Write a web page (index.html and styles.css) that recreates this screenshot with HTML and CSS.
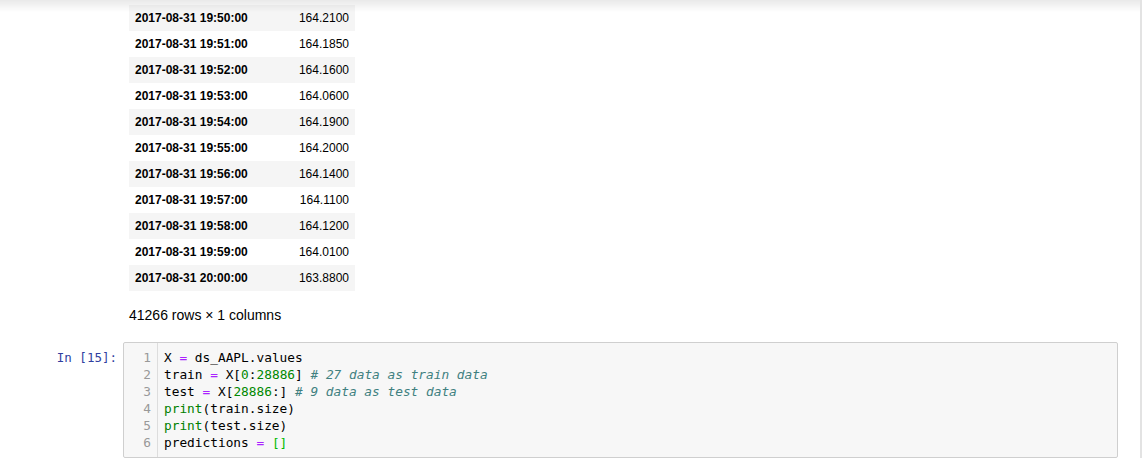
FILE: index.html
```html
<!DOCTYPE html>
<html>
<head>
<meta charset="utf-8">
<link rel="stylesheet" href="styles.css">
</head>
<body>
<div class="header-shadow"></div>
<div class="notebook">
  <div class="output">
    <table class="df">
      <tbody>
        <tr><th>2017-08-31 19:50:00</th><td>164.2100</td></tr>
        <tr><th>2017-08-31 19:51:00</th><td>164.1850</td></tr>
        <tr><th>2017-08-31 19:52:00</th><td>164.1600</td></tr>
        <tr><th>2017-08-31 19:53:00</th><td>164.0600</td></tr>
        <tr><th>2017-08-31 19:54:00</th><td>164.1900</td></tr>
        <tr><th>2017-08-31 19:55:00</th><td>164.2000</td></tr>
        <tr><th>2017-08-31 19:56:00</th><td>164.1400</td></tr>
        <tr><th>2017-08-31 19:57:00</th><td>164.1100</td></tr>
        <tr><th>2017-08-31 19:58:00</th><td>164.1200</td></tr>
        <tr><th>2017-08-31 19:59:00</th><td>164.0100</td></tr>
        <tr><th>2017-08-31 20:00:00</th><td>163.8800</td></tr>
      </tbody>
    </table>
    <p class="shape">41266 rows × 1 columns</p>
  </div>
  <div class="cell">
    <div class="prompt">In&nbsp;[15]:</div>
    <div class="input">
      <div class="gutter">
        <div>1</div><div>2</div><div>3</div><div>4</div><div>5</div><div>6</div>
      </div>
      <div class="code">
        <div class="line">X <span class="op">=</span> ds_AAPL.values</div>
        <div class="line">train <span class="op">=</span> X[<span class="num">0</span>:<span class="num">28886</span>] <span class="cm"># 27 data as train data</span></div>
        <div class="line">test <span class="op">=</span> X[<span class="num">28886</span>:] <span class="cm"># 9 data as test data</span></div>
        <div class="line"><span class="bi">print</span>(train.size)</div>
        <div class="line"><span class="bi">print</span>(test.size)</div>
        <div class="line">predictions <span class="op">=</span> <span class="br">[]</span></div>
      </div>
    </div>
  </div>
</div>
</body>
</html>
```
FILE: styles.css
```css
html, body {
  margin: 0;
  padding: 0;
  background: #fff;
}
body {
  font-family: "Liberation Sans", Arial, sans-serif;
  color: #000;
  overflow: hidden;
}
.header-shadow {
  position: fixed;
  top: 0;
  left: 0;
  width: 1140px;
  height: 12px;
  background: linear-gradient(to bottom, rgba(0,0,0,0.085), rgba(0,0,0,0));
  pointer-events: none;
}
.notebook {
  width: 1140px;
  min-height: 458px;
  border-right: 2px solid #e3e3e3;
}
.output {
  padding: 5px 0 0 129px;
}
.df {
  border-collapse: collapse;
  border-spacing: 0;
  font-size: 12px;
  width: 226px;
}
.df tr {
  height: 26px;
}
.df tr:nth-child(odd) {
  background: #f5f5f5;
}
.df th {
  font-weight: bold;
  text-align: left;
  padding: 0 0 0 6px;
  white-space: nowrap;
}
.df td {
  text-align: right;
  padding: 0 6px 0 0;
}
.shape {
  margin: 14px 0 0 0;
  font-size: 14px;
  line-height: 20px;
}
.cell {
  display: flex;
  margin-top: 17px;
}
.prompt {
  width: 117px;
  padding-right: 6px;
  text-align: right;
  font-family: "DejaVu Sans Mono", monospace;
  font-size: 12.5px;
  color: #303F9F;
  padding-top: 7px;
  line-height: 17px;
}
.input {
  width: 993px;
  display: flex;
  background: #f7f7f7;
  border: 1px solid #cfcfcf;
  border-radius: 2px;
  font-family: "DejaVu Sans Mono", monospace;
  font-size: 12.8px;
  line-height: 17px;
}
.gutter {
  width: 27px;
  padding: 6px 6px 6px 0;
  text-align: right;
  color: #999;
  border-right: 1px solid #ddd;
}
.code {
  padding: 6px 0 6px 6px;
  color: #000;
}
.line {
  white-space: pre;
}
.op { color: #AA22FF; }
.num { color: #008800; }
.cm { color: #408080; font-style: italic; }
.bi { color: #008000; }
.br { color: #00bb00; }
```
